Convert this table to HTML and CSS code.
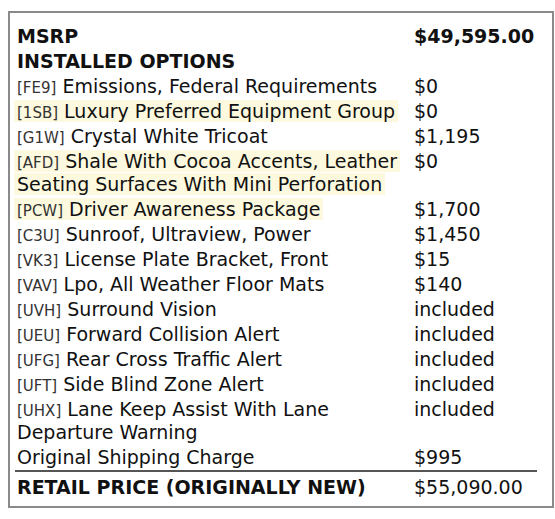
FILE: index.html
```html
<!DOCTYPE html>
<html lang="en">
<head>
  <meta charset="UTF-8" />
  <title>Window Sticker</title>
  <link rel="stylesheet" href="styles.css">
</head>
<body>

<div class="sticker">
  <table class="options">
    <tr class="head">
      <td>MSRP</td>
      <td class="price">$49,595.00</td>
    </tr>
    <tr class="head">
      <td colspan="2">INSTALLED OPTIONS</td>
    </tr>
    <tr>
      <td><span class="code">[FE9]</span> Emissions, Federal Requirements</td>
      <td class="price">$0</td>
    </tr>
    <tr>
      <td><span class="mark"><span class="code">[1SB]</span> Luxury Preferred Equipment Group</span></td>
      <td class="price">$0</td>
    </tr>
    <tr>
      <td><span class="code">[G1W]</span> Crystal White Tricoat</td>
      <td class="price">$1,195</td>
    </tr>
    <tr>
      <td><span class="mark"><span class="code">[AFD]</span> Shale With Cocoa Accents, Leather Seating Surfaces With Mini Perforation</span></td>
      <td class="price">$0</td>
    </tr>
    <tr>
      <td><span class="mark"><span class="code">[PCW]</span> Driver Awareness Package</span></td>
      <td class="price">$1,700</td>
    </tr>
    <tr>
      <td><span class="code">[C3U]</span> Sunroof, Ultraview, Power</td>
      <td class="price">$1,450</td>
    </tr>
    <tr>
      <td><span class="code">[VK3]</span> License Plate Bracket, Front</td>
      <td class="price">$15</td>
    </tr>
    <tr>
      <td><span class="code">[VAV]</span> Lpo, All Weather Floor Mats</td>
      <td class="price">$140</td>
    </tr>
    <tr>
      <td><span class="code">[UVH]</span> Surround Vision</td>
      <td class="price">included</td>
    </tr>
    <tr>
      <td><span class="code">[UEU]</span> Forward Collision Alert</td>
      <td class="price">included</td>
    </tr>
    <tr>
      <td><span class="code">[UFG]</span> Rear Cross Traffic Alert</td>
      <td class="price">included</td>
    </tr>
    <tr>
      <td><span class="code">[UFT]</span> Side Blind Zone Alert</td>
      <td class="price">included</td>
    </tr>
    <tr>
      <td><span class="code">[UHX]</span> Lane Keep Assist With Lane Departure Warning</td>
      <td class="price">included</td>
    </tr>
    <tr class="shipping">
      <td>Original Shipping Charge</td>
      <td class="price">$995</td>
    </tr>
    <tr class="total">
      <td>RETAIL PRICE (ORIGINALLY NEW)</td>
      <td class="price">$55,090.00</td>
    </tr>
  </table>
</div>

</body>
</html>
```

FILE: styles.css
```css
body {
  margin: 0;
  padding: 11px 6px 8px 8px;
  background: #fff;
  font-family: 'DejaVu Sans', Verdana, sans-serif;
  color: #111;
}
.sticker {
  width: 537px;
  border: 2px solid #8a8a8a;
  padding: 11px 0 6px 5px;
}
.options {
  width: 522px;
  border-collapse: collapse;
  font-size: 19px;
  line-height: 23px;
}
.options td {
  padding: 1px 2px;
  vertical-align: top;
}
.options td:first-child {
  width: 393px;
}
.code {
  font-size: 15px;
  line-height: 1;
  color: #333;
}
.mark {
  background: #fcf9df;
  padding: 0 3px;
  margin: 0 -3px;
  -webkit-box-decoration-break: clone;
  box-decoration-break: clone;
}
.head td {
  font-weight: 700;
}
.shipping td {
  border-bottom: 2px solid #555;
}
.total td {
  padding-top: 4px;
}
.total td:first-child {
  font-weight: 700;
}
```
